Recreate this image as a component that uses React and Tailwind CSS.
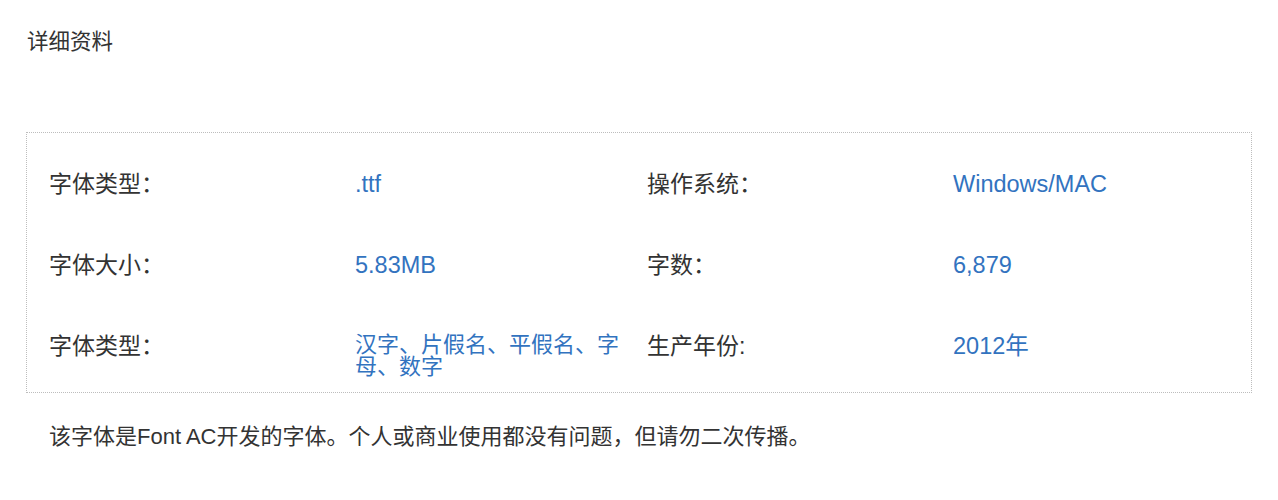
const FONT = "font-['Liberation_Sans','Noto_Sans_CJK_SC',sans-serif]";

const ROWS = [
  { label: "字体类型：", value: ".ttf", label2: "操作系统：", value2: "Windows/MAC" },
  { label: "字体大小：", value: "5.83MB", label2: "字数：", value2: "6,879" },
  { label: "字体类型：", value: "汉字、片假名、平假名、字母、数字", label2: "生产年份:", value2: "2012年", cjk: true },
];

export default function App() {
  return (
    <div className={`${FONT} bg-white w-[1278px] h-[500px] px-[26px] pt-[27px] text-[#333]`}>
      {/* Title */}
      <h2 className="pl-px text-[21.5px] leading-[30px] font-normal">详细资料</h2>

      {/* Detail box */}
      <div className="mt-[75px] border border-dotted border-[#bdbdbd] pl-[22px] pt-[39px] pb-[14px]">
        <div className="grid grid-cols-[306px_292px_306px_1fr] gap-y-[57px]">
          {ROWS.map((r, i) => (
            <div key={i} className="contents">
              <div className="text-[23px] leading-[24px] text-[#333]">{r.label}</div>
              <div
                className={
                  r.cjk
                    ? "text-[22px] leading-[22px] text-[#3273bf] pr-[6px]"
                    : "text-[23.5px] leading-[24px] text-[#3273bf]"
                }
              >
                {r.value}
              </div>
              <div className="text-[23px] leading-[24px] text-[#333]">{r.label2}</div>
              <div className="text-[23.5px] leading-[24px] text-[#3273bf]">{r.value2}</div>
            </div>
          ))}
        </div>
      </div>

      {/* Footer note */}
      <p className="mt-[29px] pl-[23px] text-[22px] leading-[30px]">
        该字体是Font AC开发的字体。个人或商业使用都没有问题，但请勿二次传播。
      </p>
    </div>
  );
}
